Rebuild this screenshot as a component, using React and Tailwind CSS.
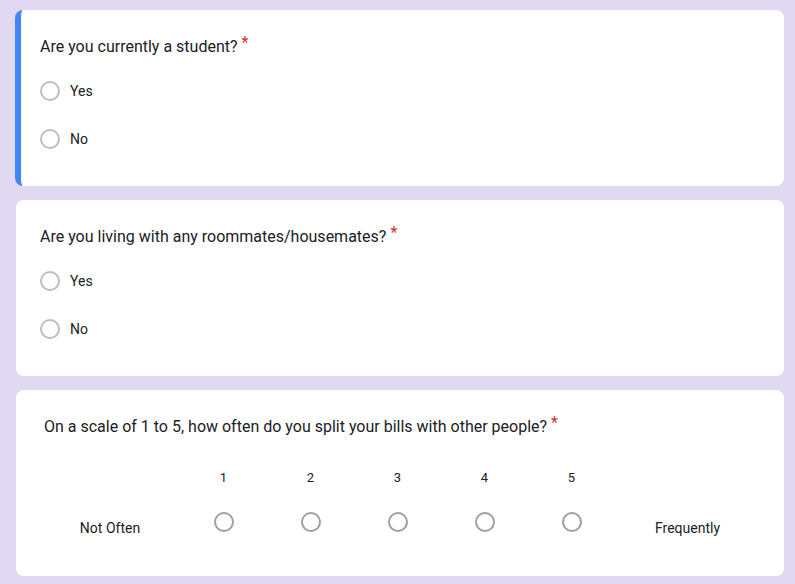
import React from "react";

const font = { fontFamily: "Roboto, 'Noto Sans', Arial, sans-serif" };

function Radio({ dark }) {
  return (
    <div
      className={`w-5 h-5 rounded-full border-2 ${dark ? "border-[#9aa0a6]" : "border-[#bdbdbd]"} shrink-0`}
    />
  );
}

function Question({ text }) {
  return (
    <div className="flex items-start text-[16px] leading-6 text-[#202124]">
      <span>{text}</span>
      <span className="text-[#d93025] ml-1 leading-4 text-[16px]">*</span>
    </div>
  );
}

function YesNoCard({ text, active }) {
  return (
    <div className={`bg-white rounded-lg ${active ? "border-l-[6px] border-[#4285f4] pl-[19px]" : "pl-6"} pr-6 pt-[25px] pb-[23px]`}>
      <Question text={text} />
      <div className="mt-2 flex flex-col">
        {["Yes", "No"].map((o) => (
          <div key={o} className="h-12 flex items-center gap-[10px]">
            <Radio />
            <span className="text-[14px] text-[#202124]">{o}</span>
          </div>
        ))}
      </div>
    </div>
  );
}

export default function App() {
  return (
    <div className="w-[795px] h-[584px] bg-[#e1d9f1] pt-[10px] pl-[15px] pr-[11px] flex flex-col gap-[14px]" style={font}>
      <YesNoCard text="Are you currently a student?" active />
      <div className="pl-px">
        <YesNoCard text="Are you living with any roommates/housemates?" />
      </div>
      <div className="pl-px">
        <div className="bg-white rounded-lg pl-6 pr-6 pt-[25px] h-[186px]">
          <div className="pl-1">
            <Question text="On a scale of 1 to 5, how often do you split your bills with other people?" />
          </div>
          <div className="grid grid-cols-[140px_repeat(5,87px)_1fr] grid-rows-[24px] mt-[27px] text-[#202124]">
            <div />
            {[1, 2, 3, 4, 5].map((n) => (
              <div key={n} className="flex items-center justify-center text-[13px]">{n}</div>
            ))}
            <div />
          </div>
          <div className="grid grid-cols-[140px_repeat(5,87px)_1fr] text-[#202124] mt-[22px] h-[28px]">
            <div className="flex items-start justify-center text-[14px] leading-5 pt-[6px]">Not Often</div>
            {[1, 2, 3, 4, 5].map((n) => (
              <div key={n} className="flex items-start justify-center">
                <Radio dark />
              </div>
            ))}
            <div className="flex items-start justify-center text-[14px] leading-5 pt-[6px]">Frequently</div>
          </div>
        </div>
      </div>
    </div>
  );
}
